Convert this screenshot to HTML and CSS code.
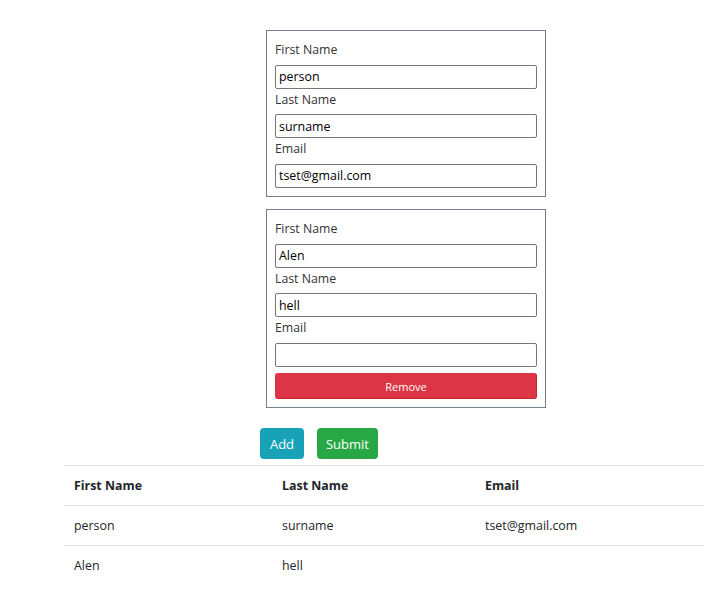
FILE: index.html
```html
<!DOCTYPE html>
<html>
<head>
<meta charset="utf-8">
<link rel="stylesheet" href="styles.css">
</head>
<body>
<div class="page">
  <div class="forms">
    <div class="card">
      <label>First Name</label>
      <input type="text" value="person">
      <label>Last Name</label>
      <input type="text" value="surname">
      <label>Email</label>
      <input type="text" value="tset@gmail.com">
    </div>
    <div class="card">
      <label>First Name</label>
      <input type="text" value="Alen">
      <label>Last Name</label>
      <input type="text" value="hell">
      <label>Email</label>
      <input type="text" value="">
      <button class="btn-remove">Remove</button>
    </div>
  </div>
  <div class="actions">
    <button class="btn btn-add">Add</button>
    <button class="btn btn-submit">Submit</button>
  </div>
  <table class="data">
    <thead>
      <tr><th class="c1">First Name</th><th class="c2">Last Name</th><th>Email</th></tr>
    </thead>
    <tbody>
      <tr><td>person</td><td>surname</td><td>tset@gmail.com</td></tr>
      <tr><td>Alen</td><td>hell</td><td></td></tr>
    </tbody>
  </table>
</div>
</body>
</html>
```
FILE: styles.css
```css
html, body {
  margin: 0;
  padding: 0;
  overflow: hidden;
  background: #fff;
}
body {
  font-family: "Open Sans", "Noto Sans", sans-serif;
  font-size: 12.5px;
  color: #212529;
}
.page {
  padding-top: 30px;
}
.forms {
  margin-left: 266px;
  width: 280px;
}
.card {
  border: 1px solid #708090;
  padding: 8px;
  margin-bottom: 12.5px;
  display: flex;
  flex-direction: column;
}
.card label {
  display: block;
  line-height: 21px;
  margin-bottom: 4.5px;
  font-size: 12.3px;
  color: #333;
}
.card input {
  box-sizing: border-box;
  height: 24px;
  width: 100%;
  margin: 0;
  padding: 0 3px;
  border: 1px solid #767676;
  border-radius: 2px;
  font-family: inherit;
  font-size: 12.4px;
  color: #000;
  background: #fff;
}
.btn-remove {
  margin-top: 6.5px;
  height: 26px;
  border: 1px solid #c82333;
  border-top-color: #dc3545;
  border-left-color: #dc3545;
  border-radius: 3px;
  background: #dc3545;
  color: #fff;
  font-family: inherit;
  font-size: 11px;
  padding: 0;
}
.actions {
  margin-left: 260px;
  margin-top: 20px;
  display: flex;
  gap: 13px;
}
.btn {
  height: 31px;
  border: none;
  border-radius: 4px;
  color: #fff;
  font-family: inherit;
  font-size: 13px;
  padding: 0;
}
.btn-add {
  background: #17a2b8;
  width: 44px;
}
.btn-submit {
  background: #28a745;
  width: 61px;
}
.data {
  margin-top: 6px;
  margin-left: 64px;
  width: 640px;
  border-collapse: collapse;
  table-layout: fixed;
}
.data th, .data td {
  text-align: left;
  padding: 9px 10px;
  line-height: 21px;
  border-top: 1px solid #dee2e6;
  font-size: 12.4px;
}
.data th {
  font-weight: 700;
}
.data .c1 { width: 188px; }
.data .c2 { width: 183px; }
```
